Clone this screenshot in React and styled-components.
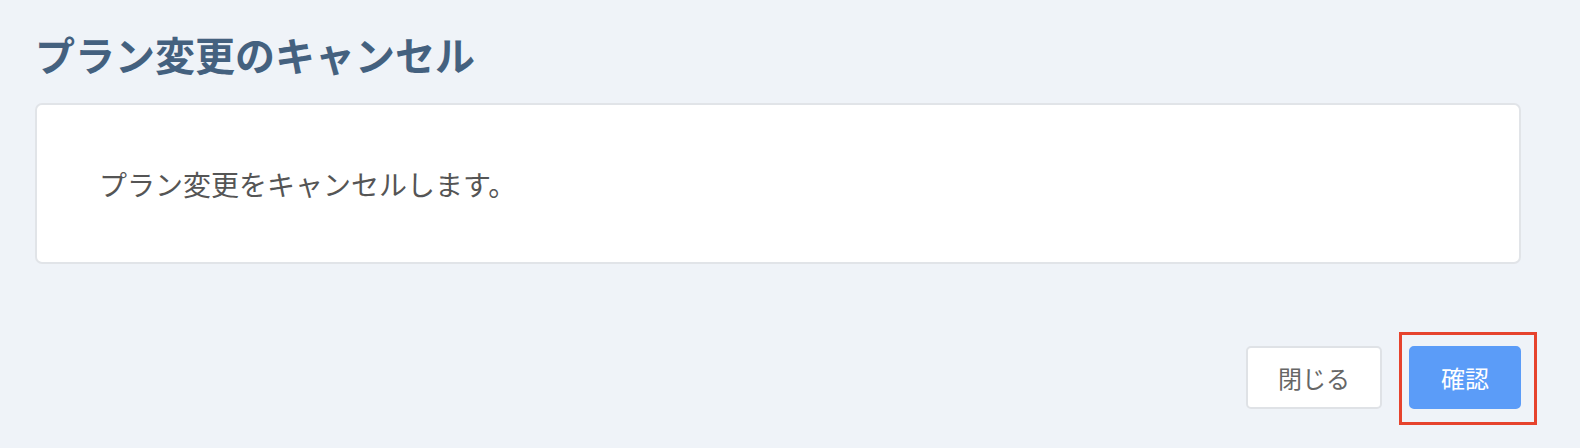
import React from 'react';
import styled, { createGlobalStyle } from 'styled-components';

const GlobalStyle = createGlobalStyle`
    html, body {
        margin: 0;
        padding: 0;
        background: #eff3f8;
    }
    body {
        font-family: 'Noto Sans CJK JP', 'Noto Sans', sans-serif;
    }
`;

const Page = styled.div`
    box-sizing: border-box;
    width: 1580px;
    height: 448px;
    padding: 31px 59px 0 35px;
    background: #eff3f8;
`;

const Title = styled.h1`
    margin: 0;
    font-size: 40px;
    line-height: 46px;
    font-weight: 700;
    color: #44617f;
`;

const Card = styled.div`
    box-sizing: border-box;
    margin-top: 26px;
    height: 161px;
    padding: 0 62px;
    display: flex;
    align-items: center;
    background: #fff;
    border: 2px solid #e1e4e8;
    border-radius: 7px;
`;

const Message = styled.p`
    margin: 0;
    font-size: 28px;
    line-height: 36px;
    color: #555;
`;

const Footer = styled.div`
    display: flex;
    justify-content: flex-end;
    align-items: center;
    gap: 27px;
    margin-top: 82px;
`;

const Button = styled.button`
    box-sizing: border-box;
    height: 63px;
    padding: 0 30px;
    font-family: inherit;
    font-size: 24px;
    border-radius: 5px;
    cursor: pointer;
    color: ${(p) => (p.$primary ? '#fff' : '#666')};
    background: ${(p) => (p.$primary ? '#5b9cf8' : '#fff')};
    border: 2px solid ${(p) => (p.$primary ? '#5b9cf8' : '#dfe2e6')};
`;

// red annotation frame drawn around the confirm button
const Highlight = styled.span`
    display: inline-flex;
    margin: -14px -16px -16px -10px;
    padding: 11px 13px 13px 7px;
    border: 3px solid #e6432d;
`;

export default function App() {
    return (
        <Page>
            <GlobalStyle />
            <Title>プラン変更のキャンセル</Title>
            <Card>
                <Message>プラン変更をキャンセルします。</Message>
            </Card>
            <Footer>
                <Button>閉じる</Button>
                <Highlight>
                    <Button $primary>確認</Button>
                </Highlight>
            </Footer>
        </Page>
    );
}
